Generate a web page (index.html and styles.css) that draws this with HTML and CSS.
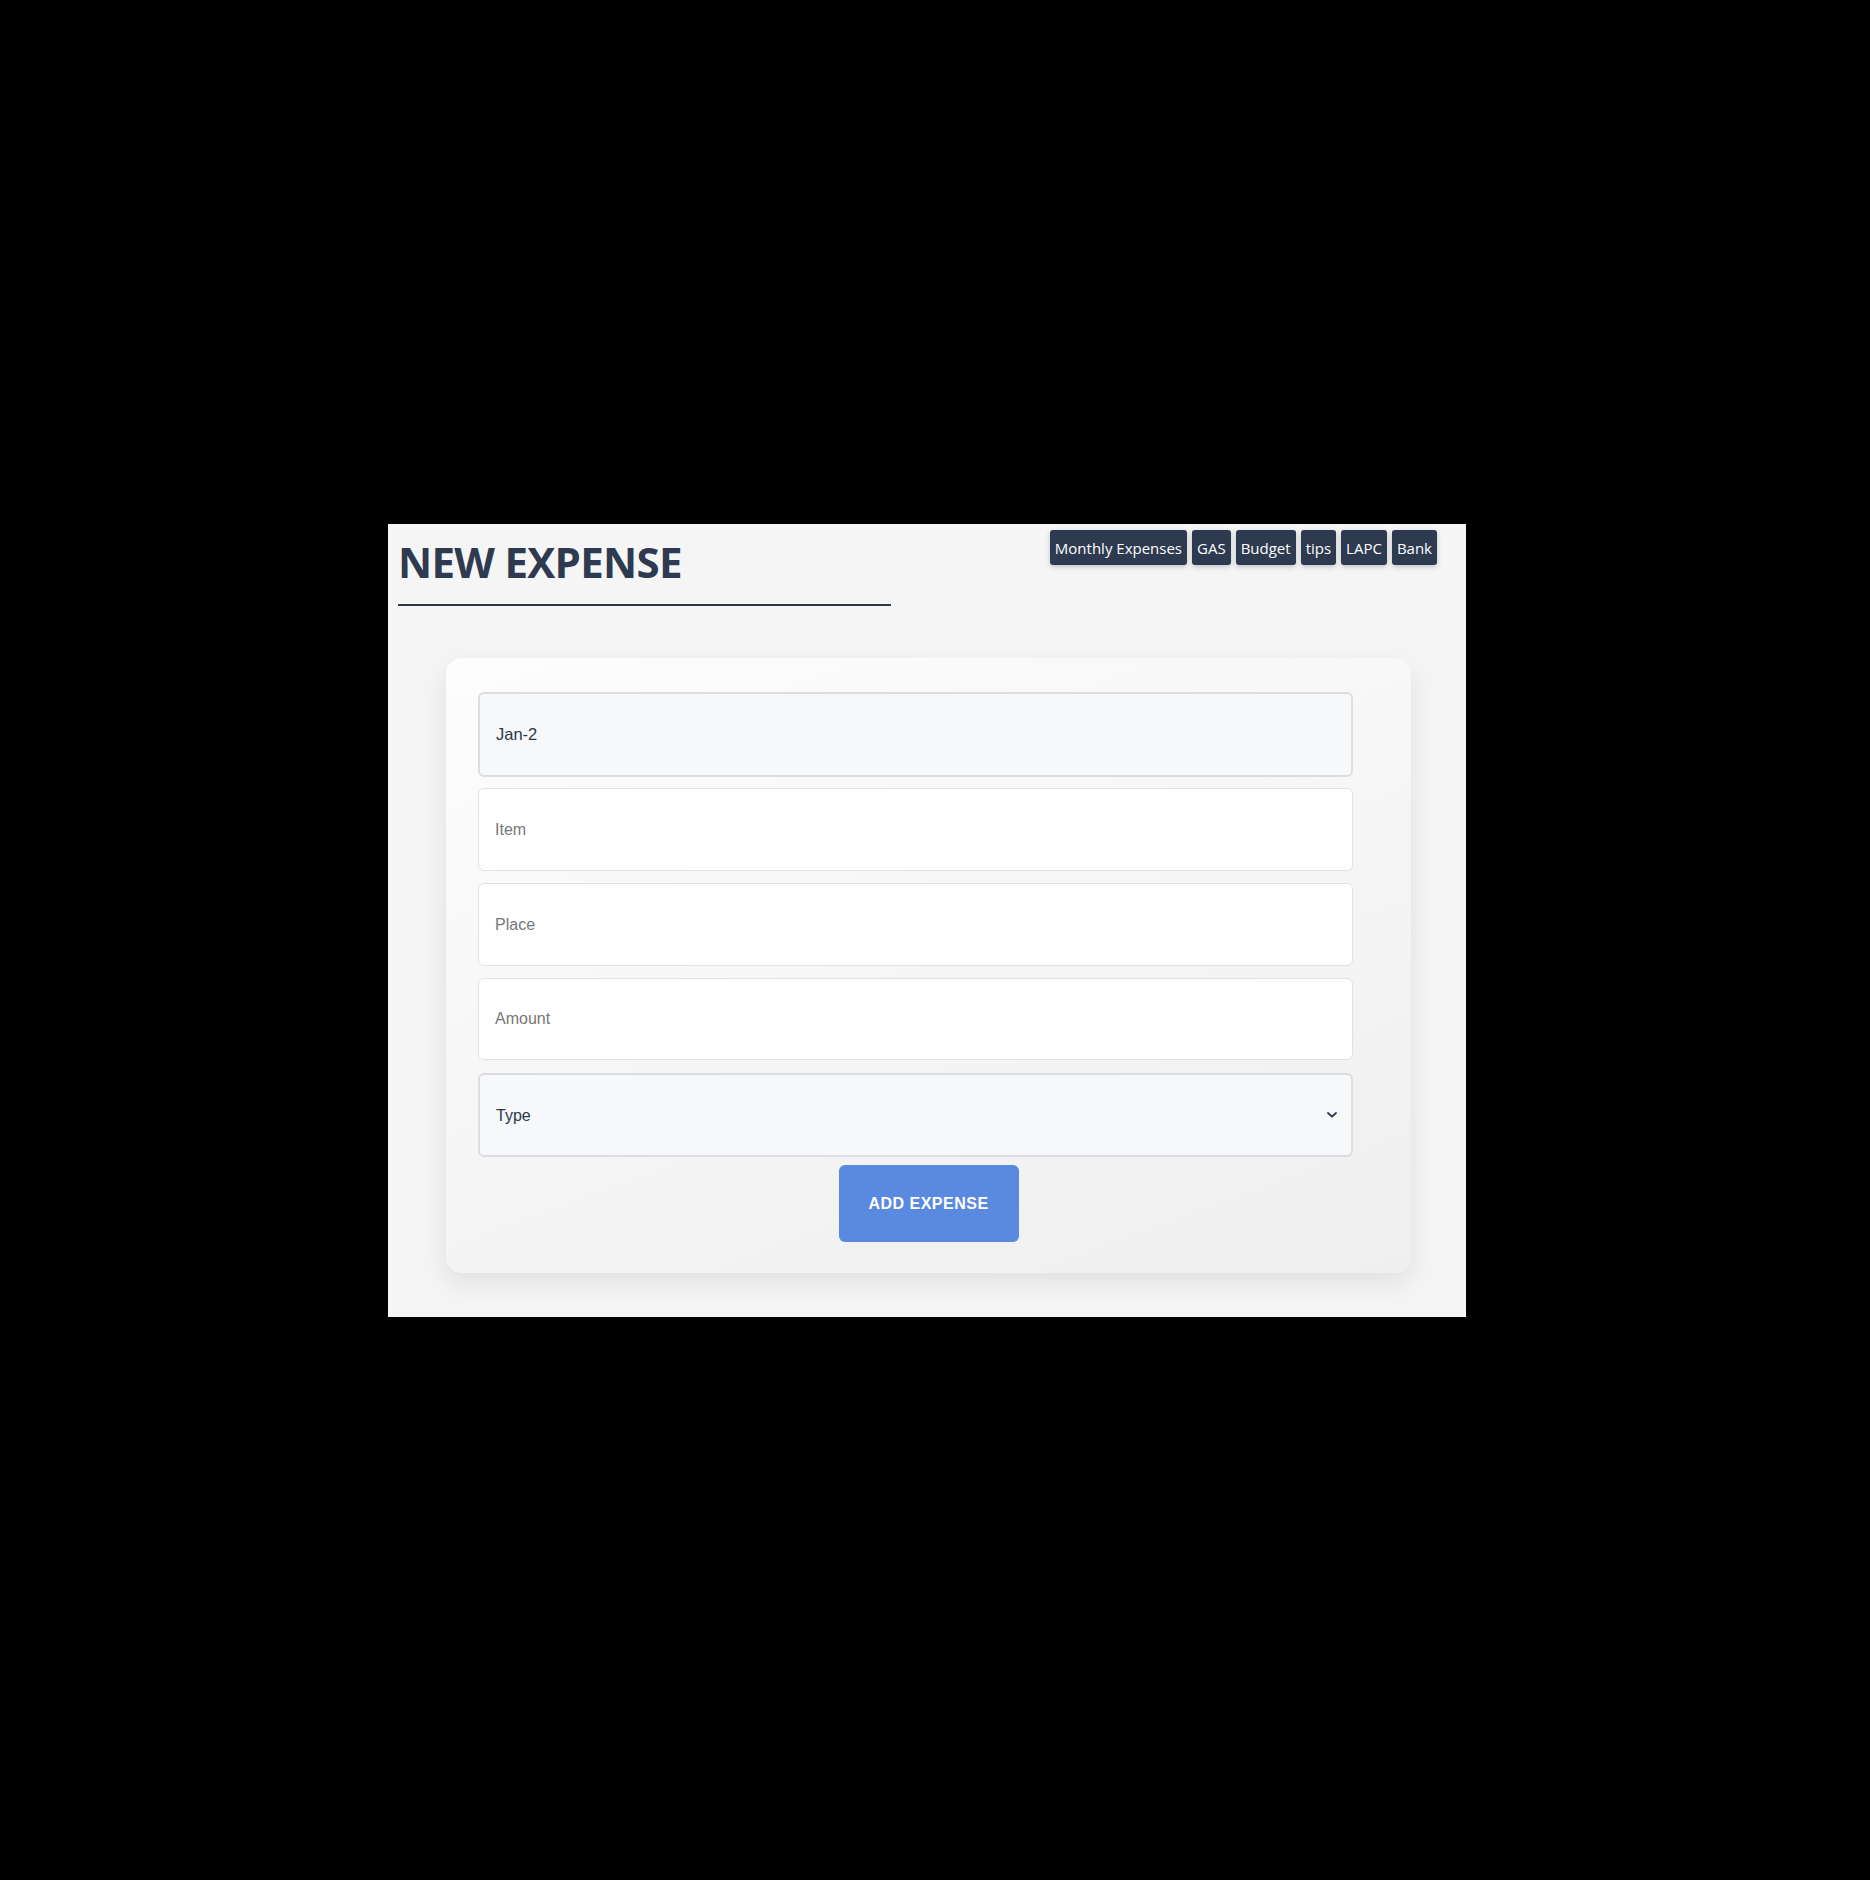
FILE: index.html
```html
<!DOCTYPE html>
<html lang="en">
<head>
<meta charset="utf-8">
<title>New Expense</title>
<link rel="stylesheet" href="styles.css">
</head>
<body>
<div class="app">
  <header class="top">
    <div class="title-block">
      <h1 class="title">NEW EXPENSE</h1>
    </div>
    <nav class="links">
      <a class="link-btn">Monthly Expenses</a>
      <a class="link-btn">GAS</a>
      <a class="link-btn">Budget</a>
      <a class="link-btn">tips</a>
      <a class="link-btn">LAPC</a>
      <a class="link-btn">Bank</a>
    </nav>
  </header>
  <main class="card">
    <form class="form">
      <div class="field field-date">Jan-2</div>
      <input class="field field-text f-item" type="text" placeholder="Item">
      <input class="field field-text f-place" type="text" placeholder="Place">
      <input class="field field-text f-amount" type="text" placeholder="Amount">
      <div class="select-wrap">
        <select class="field field-select">
          <option>Type</option>
        </select>
        <svg class="chev" width="10" height="6" viewBox="0 0 10 6"><path d="M1 1 L5 4.6 L9 1" fill="none" stroke="#2d3748" stroke-width="1.8" stroke-linecap="round" stroke-linejoin="round"/></svg>
      </div>
      <button class="submit" type="button">ADD EXPENSE</button>
    </form>
  </main>
</div>
</body>
</html>
```
FILE: styles.css
```css
html, body {
  margin: 0;
  padding: 0;
  background: #000;
}
body {
  padding: 524px 0 0 388px;
  min-height: 1880px;
  box-sizing: border-box;
}
.app {
  width: 1078px;
  height: 793px;
  background: #f5f5f5;
  box-sizing: border-box;
  overflow: hidden;
}
.top {
  display: flex;
  justify-content: space-between;
  align-items: flex-start;
  padding: 6px 29px 0 10px;
}
.title-block {
  width: 493px;
  margin-top: 3px;
  padding-bottom: 14px;
  border-bottom: 2px solid #2d3748;
}
.title {
  margin: 0;
  font-family: "Open Sans", "Noto Sans", sans-serif;
  font-weight: 700;
  font-size: 42px;
  line-height: 57px;
  color: #2d3a4f;
  letter-spacing: -0.7px;
}
.links {
  display: flex;
  gap: 5px;
}
.link-btn {
  display: flex;
  align-items: center;
  height: 35px;
  padding: 0 5px;
  background: #2d3a4f;
  color: #fff;
  border-radius: 3px;
  font-family: "Open Sans", "Noto Sans", sans-serif;
  font-size: 15px;
  box-shadow: 0 2px 5px rgba(45, 58, 79, 0.25);
  cursor: pointer;
}
.card {
  display: block;
  width: 965px;
  margin: 52px 0 0 58px;
  box-sizing: border-box;
  padding: 34px 32px 31px 32px;
  border-radius: 16px;
  background: linear-gradient(160deg, #fdfdfd 0%, #f5f5f5 55%, #efefef 100%);
  box-shadow: 0 10px 28px rgba(0, 0, 0, 0.09);
}
.form {
  display: flex;
  flex-direction: column;
  margin: 0;
}
.field {
  width: 875px;
  box-sizing: border-box;
  padding: 0 16px;
  font-family: "Liberation Sans", Arial, sans-serif;
  font-size: 16px;
  color: #2d3748;
  border-radius: 6px;
  outline: none;
  margin: 0;
}
.field-date {
  height: 85px;
  display: flex;
  align-items: center;
  background: #f7f8fa;
  border: 2px solid #dcdde1;
  margin-bottom: 11px;
  font-size: 16.5px;
}
.field-text {
  height: 83px;
  background: #fff;
  border: 1px solid #e2e2e2;
}
.field-text::placeholder {
  color: #777;
}
.f-item { margin-bottom: 12px; }
.f-place { margin-bottom: 12px; }
.f-amount { height: 82px; margin-bottom: 13px; }
.select-wrap {
  position: relative;
  width: 875px;
  margin-bottom: 8px;
}
.field-select {
  display: block;
  height: 84px;
  appearance: none;
  -webkit-appearance: none;
  background: #f7f8fa;
  border: 2px solid #dcdde1;
}
.chev {
  position: absolute;
  right: 16px;
  top: 39px;
}
.submit {
  align-self: center;
  width: 180px;
  height: 77px;
  border: none;
  border-radius: 6px;
  background: #5a8ae0;
  color: #fff;
  font-family: "Liberation Sans", Arial, sans-serif;
  font-weight: 700;
  font-size: 16px;
  letter-spacing: 0.5px;
  cursor: pointer;
}
```
